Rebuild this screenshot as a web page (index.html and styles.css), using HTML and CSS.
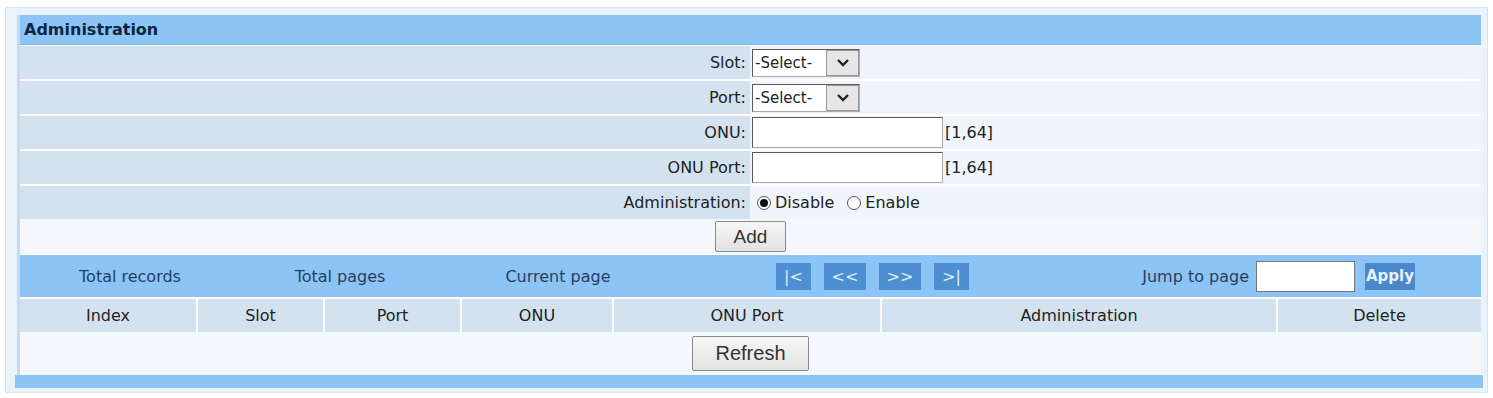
FILE: index.html
```html
<!DOCTYPE html>
<html>
<head>
<meta charset="utf-8">
<link rel="stylesheet" href="styles.css">
</head>
<body>
<div class="frame">
  <div class="panel">
    <div class="title">Administration</div>
    <div class="row">
      <div class="label">Slot:</div>
      <div class="value">
        <div class="sel"><select><option>-Select-</option></select><span class="arrow"><svg width="14" height="10" viewBox="0 0 14 10"><path d="M2 2 L7 7 L12 2" fill="none" stroke="#222" stroke-width="2.4"/></svg></span></div>
      </div>
    </div>
    <div class="row">
      <div class="label">Port:</div>
      <div class="value">
        <div class="sel"><select><option>-Select-</option></select><span class="arrow"><svg width="14" height="10" viewBox="0 0 14 10"><path d="M2 2 L7 7 L12 2" fill="none" stroke="#222" stroke-width="2.4"/></svg></span></div>
      </div>
    </div>
    <div class="row">
      <div class="label">ONU:</div>
      <div class="value"><input class="txt" type="text"><span class="range">[1,64]</span></div>
    </div>
    <div class="row">
      <div class="label">ONU Port:</div>
      <div class="value"><input class="txt" type="text"><span class="range">[1,64]</span></div>
    </div>
    <div class="row">
      <div class="label">Administration:</div>
      <div class="value">
        <label class="opt"><input type="radio" name="adm" checked><span>Disable</span></label>
        <label class="opt"><input type="radio" name="adm"><span>Enable</span></label>
      </div>
    </div>
    <div class="actrow add-row"><button class="btn btn-add">Add</button></div>
    <div class="pager">
      <div class="pc pc1">Total records</div>
      <div class="pc pc2">Total pages</div>
      <div class="pc pc3">Current page</div>
      <div class="navs">
        <span class="nav nav-s">|&lt;</span>
        <span class="nav nav-w">&lt;&lt;</span>
        <span class="nav nav-w">&gt;&gt;</span>
        <span class="nav nav-s">&gt;|</span>
      </div>
      <div class="jump">Jump to page</div>
      <input class="jinput" type="text">
      <span class="apply">Apply</span>
    </div>
    <div class="thead">
      <div class="th c1">Index</div>
      <div class="th c2">Slot</div>
      <div class="th c3">Port</div>
      <div class="th c4">ONU</div>
      <div class="th c5">ONU Port</div>
      <div class="th c6">Administration</div>
      <div class="th c7">Delete</div>
    </div>
    <div class="actrow refresh-row"><button class="btn btn-refresh">Refresh</button></div>
    <div class="bottombar"></div>
  </div>
</div>
</body>
</html>
```
FILE: styles.css
```css
* { box-sizing: border-box; }
body {
  margin: 0;
  background: #ffffff;
  font-family: "DejaVu Sans", Verdana, sans-serif;
  font-size: 16px;
  color: #222;
}
.frame {
  margin: 7px 5px 5px 5px;
  border: 1px solid #cfe3f5;
  background: #eaf3fb;
  padding: 7px 6px 4px 9px;
  height: 386px;
}
.panel {
  width: 1461px;
  margin-left: 5px;
  background: #ffffff;
  display: flex;
  flex-direction: column;
  box-shadow: -3px 0 0 #c3dcf2;
}
.title {
  height: 30px;
  background: #8dc4f6;
  font-weight: bold;
  font-size: 16px;
  color: #0e2442;
  padding-left: 4px;
  display: flex;
  align-items: center;
  margin-bottom: 1px;
  border-bottom: 1px solid #7fb6e8;
}
.row {
  display: flex;
  height: 33px;
  margin-bottom: 2px;
}
.label {
  width: 730px;
  background: #d4e2ef;
  padding-right: 4px;
  display: flex;
  align-items: center;
  justify-content: flex-end;
  color: #222;
}
.value {
  flex: 1;
  background: #eff5fb;
  display: flex;
  align-items: center;
  padding-left: 2px;
}
.sel {
  display: flex;
  width: 108px;
  height: 28px;
  border: 1px solid #5a5a5a;
  border-right-color: #aaa;
  border-bottom-color: #aaa;
  background: #fff;
}
.sel select {
  appearance: none;
  -webkit-appearance: none;
  border: none;
  background: #fff;
  font-family: "DejaVu Sans", Verdana, sans-serif;
  font-size: 15px;
  color: #222;
  width: 73px;
  padding: 0 0 0 2px;
  outline: none;
}
.arrow {
  width: 33px;
  background: #e6e6e6;
  border: 1px solid #999;
  display: flex;
  align-items: center;
  justify-content: center;
}
.txt {
  width: 191px;
  height: 31px;
  border: 1px solid #5a5a5a;
  border-right-color: #aaa;
  border-bottom-color: #aaa;
  background: #fff;
  margin: 0;
}
.range {
  margin-left: 2px;
  color: #222;
}
.opt {
  display: flex;
  align-items: center;
  margin-right: 8px;
}
.opt input {
  appearance: none;
  -webkit-appearance: none;
  width: 14px;
  height: 14px;
  border: 1px solid #555;
  border-radius: 50%;
  background: #fff;
  margin: 0 4px 0 5px;
  display: grid;
  place-content: center;
}
.opt input:checked::before {
  content: "";
  width: 8px;
  height: 8px;
  border-radius: 50%;
  background: #111;
}
.opt span { color: #222; }
.actrow {
  display: flex;
  justify-content: center;
  align-items: center;
  background: #f4f8fc;
}
.add-row {
  height: 35px;
  margin-top: -2px;
  margin-bottom: 1px;
}
.btn {
  font-family: "Liberation Sans", Arial, sans-serif;
  font-size: 19px;
  color: #333;
  background: linear-gradient(#f6f6f6, #e2e2e2);
  border: 1px solid #8a8a8a;
  border-radius: 2px;
  padding: 0;
}
.btn-add { width: 71px; height: 31px; }
.btn-refresh { width: 117px; height: 35px; font-size: 20px; }
.pager {
  height: 42px;
  background: #8dc4f6;
  display: flex;
  align-items: center;
  color: #25405f;
  margin-bottom: 2px;
}
.pc { text-align: center; }
.pc1 { width: 220px; }
.pc2 { width: 200px; }
.pc3 { width: 236px; }
.navs {
  display: flex;
  gap: 13px;
  margin-left: 100px;
}
.nav {
  height: 27px;
  background: #4d8fd2;
  color: #dcefff;
  display: flex;
  align-items: center;
  justify-content: center;
  font-size: 16px;
}
.nav-s { width: 35px; }
.nav-w { width: 42px; }
.jump {
  flex: 1;
  text-align: right;
  padding-right: 7px;
}
.jinput {
  width: 99px;
  height: 31px;
  border: 1px solid #777;
  background: #fff;
  margin: 0;
}
.apply {
  width: 50px;
  height: 27px;
  margin-left: 10px;
  margin-right: 66px;
  background: #4a87c8;
  color: #e6f2fd;
  display: flex;
  align-items: center;
  justify-content: center;
  font-weight: bold;
  font-size: 15px;
}
.thead {
  display: flex;
  gap: 2px;
  height: 33px;
}
.th {
  background: #d4e2ef;
  display: flex;
  align-items: center;
  justify-content: center;
  color: #222;
}
.c1 { width: 176px; }
.c2 { width: 125px; }
.c3 { width: 135px; }
.c4 { width: 150px; }
.c5 { width: 266px; }
.c6 { width: 394px; }
.c7 { flex: 1; }
.refresh-row {
  height: 43px;
}
.bottombar {
  height: 13px;
  background: #8dc4f6;
  margin-left: -5px;
  margin-right: -2px;
}
```
